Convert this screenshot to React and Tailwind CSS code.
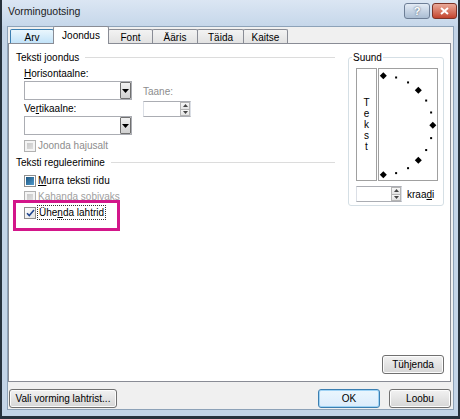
import React from 'react';

// Windows 7 style "Vorminguotsing" dialog (Joondus tab)

const tabs = [
    { name: 'Arv', w: 'w-[44px]', state: 'hot' },
    { name: 'Joondus', w: 'w-[56px]', state: 'active' },
    { name: 'Font', w: 'w-[45px]' },
    { name: 'Ääris', w: 'w-[46px]' },
    { name: 'Täida', w: 'w-[47px]' },
    { name: 'Kaitse', w: 'w-[45px]' },
];

function Tab({ tab, first }) {
    if (tab.state === 'active') {
        return (
            <div className={`${tab.w} h-[18px] -ml-px bg-white border border-b-0 border-[#898c95] rounded-t-[2px] flex items-center justify-center relative z-10`}>
                {tab.name}
            </div>
        );
    }
    const skin = tab.state === 'hot'
        ? 'bg-gradient-to-b from-[#eaf6fd] to-[#bfe1f8] border-[#3c7fb1]'
        : 'bg-gradient-to-b from-[#f3f3f3] to-[#e1e1e1] border-[#898c95]';
    return (
        <div className={`${tab.w} h-[15px] ${first ? '' : '-ml-px'} border border-b-0 rounded-t-[2px] flex items-center justify-center pt-px ${skin}`}>
            {tab.name}
        </div>
    );
}

function Dropdown() {
    return (
        <div className="w-[108px] h-[19px] flex bg-white border border-[#abadb3]">
            <div className="flex-1" />
            <div className="w-[11px] border border-[#707070] rounded-[1px] bg-gradient-to-b from-[#f2f2f2] to-[#d0d0d0] flex items-center justify-center">
                <svg width="7" height="4" viewBox="0 0 7 4"><path d="M0 0h7L3.5 4z" fill="#000" /></svg>
            </div>
        </div>
    );
}

function Spinner({ w }) {
    return (
        <div className={`${w} h-[16px] flex bg-white border border-[#abadb3] border-l-[#dbdfe6] border-r-[#dbdfe6]`}>
            <div className="flex-1" />
            <div className="w-[10px] flex flex-col">
                <div className="flex-1 border border-[#b5b5b5] bg-gradient-to-b from-[#f7f7f7] to-[#e3e3e3] flex items-center justify-center">
                    <svg width="5" height="3" viewBox="0 0 5 3"><path d="M0 3h5L2.5 0z" fill="#444" /></svg>
                </div>
                <div className="flex-1 -mt-px border border-[#b5b5b5] bg-gradient-to-b from-[#f7f7f7] to-[#e3e3e3] flex items-center justify-center">
                    <svg width="5" height="3" viewBox="0 0 5 3"><path d="M0 0h5L2.5 3z" fill="#444" /></svg>
                </div>
            </div>
        </div>
    );
}

function Check({ kind }) {
    if (kind === 'disabled') {
        return (
            <div className="w-[12px] h-[12px] border border-[#b1b1b1] bg-[#f4f4f4] p-[2px]">
                <div className="w-full h-full bg-gradient-to-br from-[#c9c9c9] to-[#dedede]" />
            </div>
        );
    }
    if (kind === 'mixed') {
        return (
            <div className="w-[12px] h-[12px] border border-[#8f8f8f] bg-white p-[1px]">
                <div className="w-full h-full bg-gradient-to-br from-[#1d557f] to-[#4f9cd0]" />
            </div>
        );
    }
    return (
        <div className="w-[12px] h-[12px] border border-[#8f8f8f] bg-gradient-to-br from-[#ffffff] to-[#e3e3e3] flex items-center justify-center">
            <svg width="9" height="8" viewBox="0 0 9 8"><path d="M1 4.2l2.3 2.3L8 1" stroke="#21468f" strokeWidth="1.6" fill="none" /></svg>
        </div>
    );
}

function SectionHeader({ children }) {
    return (
        <div className="h-[15px] flex items-center gap-[6px]">
            <span>{children}</span>
            <div className="flex-1 h-px bg-[#dcdcdc]" />
        </div>
    );
}

function Dial() {
    const dots = [];
    for (let i = 0; i <= 12; i++) {
        const a = (-90 + i * 15) * Math.PI / 180;
        const x = 4.3 + 49.5 * Math.cos(a);
        const y = 56.3 + 49.5 * Math.sin(a);
        if (i % 3 === 0) {
            dots.push(<polygon key={i} points={`${x},${y - 3.5} ${x + 3.5},${y} ${x},${y + 3.5} ${x - 3.5},${y}`} fill="#000" />);
        } else {
            dots.push(<rect key={i} x={x - 1} y={y - 1} width="2" height="2" fill="#000" />);
        }
    }
    return (
        <div className="w-[60px] h-[113px] border border-[#a0a0a0] bg-white">
            <svg width="58" height="111" viewBox="0 0 58 111">{dots}</svg>
        </div>
    );
}

function Button({ children, w, primary }) {
    const skin = primary
        ? 'border-[#3c7fb1] shadow-[inset_0_0_0_1px_#9fd3f5] from-[#eaf6fd] to-[#dcecfc]'
        : 'border-[#707070] shadow-[inset_0_0_0_1px_#fcfcfc] from-[#f2f2f2] to-[#d6d6d6]';
    return (
        <div className={`${w} h-[19px] border rounded-[3px] bg-gradient-to-b flex items-center justify-center ${skin}`}>
            <span>{children}</span>
        </div>
    );
}

export default function App() {
    return (
        <div className="w-[460px] h-[419px] bg-[#c3d4e7] border-l-2 border-r-2 border-b-[3px] border-[#27323d] flex flex-col text-[10px] leading-[15px] text-black font-['Liberation_Sans',Arial,sans-serif]">
            {/* title bar */}
            <div className="h-[26px] flex items-start bg-gradient-to-b from-[#dbe6f3] to-[#c6d7ea] pl-[6px] pr-[1px]">
                <span className="pt-[4px] text-[10.5px] text-[#1b1b1b]">Vorminguotsing</span>
                <div className="ml-auto mt-[3px] flex gap-[2px]">
                    <div className="w-[26px] h-[16px] rounded-[3px] border border-[#6d7e96] bg-gradient-to-b from-[#e3ebf5] to-[#aabdd3] flex items-center justify-center text-white font-bold text-[11px] [text-shadow:0_0_2px_#34495e]">?</div>
                    <div className="w-[25px] h-[16px] rounded-[3px] border border-[#7c3327] bg-gradient-to-b from-[#e9a99a] to-[#c2422c] flex items-center justify-center">
                        <svg width="9" height="8" viewBox="0 0 9 8"><path d="M1 1l7 6M8 1L1 7" stroke="#fff" strokeWidth="2" /></svg>
                    </div>
                </div>
            </div>

            {/* body */}
            <div className="flex-1 ml-[5px] mr-[4px] mb-[6px] border border-[#8da2b8] bg-[#f0f0f0] flex flex-col pr-[2px]">
                <div className="h-[17px] flex items-end pl-[2px] -mb-px">
                    {tabs.map((t, i) => <Tab key={t.name} tab={t} first={i === 0} />)}
                </div>

                <div className="h-[339px] bg-white border border-[#898c95] flex flex-col">
                    <div className="flex pl-[7px] pt-[6px]">
                        <div className="w-[319px] mr-[13px]">
                            <SectionHeader>Teksti joondus</SectionHeader>
                            <div className="flex ml-[8px] mt-[1px]">
                                <div className="w-[108px]">
                                    <div className="h-[15px]"><u>H</u>orisontaalne:</div>
                                    <Dropdown />
                                    <div className="h-[15px] mt-[1px]">Ve<u>r</u>tikaalne:</div>
                                    <Dropdown />
                                </div>
                                <div className="ml-[11px] pt-[18px]">
                                    <div className="h-[15px] text-[#8d8d8d]">Taane:</div>
                                    <div className="mt-[2px]"><Spinner w="w-[48px]" /></div>
                                </div>
                            </div>
                            <div className="ml-[8px] mt-[3px] h-[15px] flex items-center gap-[2px]">
                                <Check kind="disabled" />
                                <span className="text-[#8d8d8d]">Joonda hajusalt</span>
                            </div>

                            <div className="mt-[2px]"><SectionHeader>Teksti reguleerimine</SectionHeader></div>
                            <div className="ml-[8px] mt-[3px] h-[15px] flex items-center gap-[2px]">
                                <Check kind="mixed" />
                                <span><u>M</u>urra teksti ridu</span>
                            </div>
                            <div className="ml-[8px] mt-[1px] h-[15px] flex items-center gap-[2px]">
                                <Check kind="disabled" />
                                <span className="text-[#a0a0a0]">Kahanda so<u>b</u>ivaks</span>
                            </div>
                            <div className="ml-[8px] mt-[1px] h-[15px] flex items-center gap-[1px] relative">
                                <Check kind="checked" />
                                <span className="border border-dotted border-[#333] leading-[13px] px-px">Ühe<u>n</u>da lahtrid</span>
                                <div className="absolute left-[-11px] top-[-5px] w-[107px] h-[31px] border-[3px] border-[#d3168a]" />
                            </div>
                        </div>

                        <fieldset className="w-[96px] h-[156px] border border-[#d5dfe5] rounded-[3px] px-[3px]">
                            <legend className="px-px h-[15px]">Suund</legend>
                            <div className="ml-[4px] mt-[3px] flex gap-[1px]">
                                <div className="w-[21px] h-[113px] border border-[#a0a0a0] flex flex-col items-center justify-center leading-[11px]">
                                    <span>T</span>
                                    <span>e</span>
                                    <span>k</span>
                                    <span>s</span>
                                    <span>t</span>
                                </div>
                                <Dial />
                            </div>
                            <div className="ml-[4px] mt-[5px] flex items-center gap-[5px]">
                                <Spinner w="w-[46px]" />
                                <span>kraa<u>d</u>i</span>
                            </div>
                        </fieldset>
                    </div>

                    <div className="mt-auto flex justify-end pr-[6px] pb-[7px]">
                        <Button w="w-[62px]">Tüh<u>j</u>enda</Button>
                    </div>
                </div>

                <div className="mt-[7px] flex items-center pl-px">
                    <Button w="w-[108px]">Vali vormin<u>g</u> lahtrist...</Button>
                    <div className="ml-auto flex gap-[9px]">
                        <Button w="w-[62px]" primary>OK</Button>
                        <Button w="w-[62px]">Loobu</Button>
                    </div>
                </div>
            </div>
        </div>
    );
}
